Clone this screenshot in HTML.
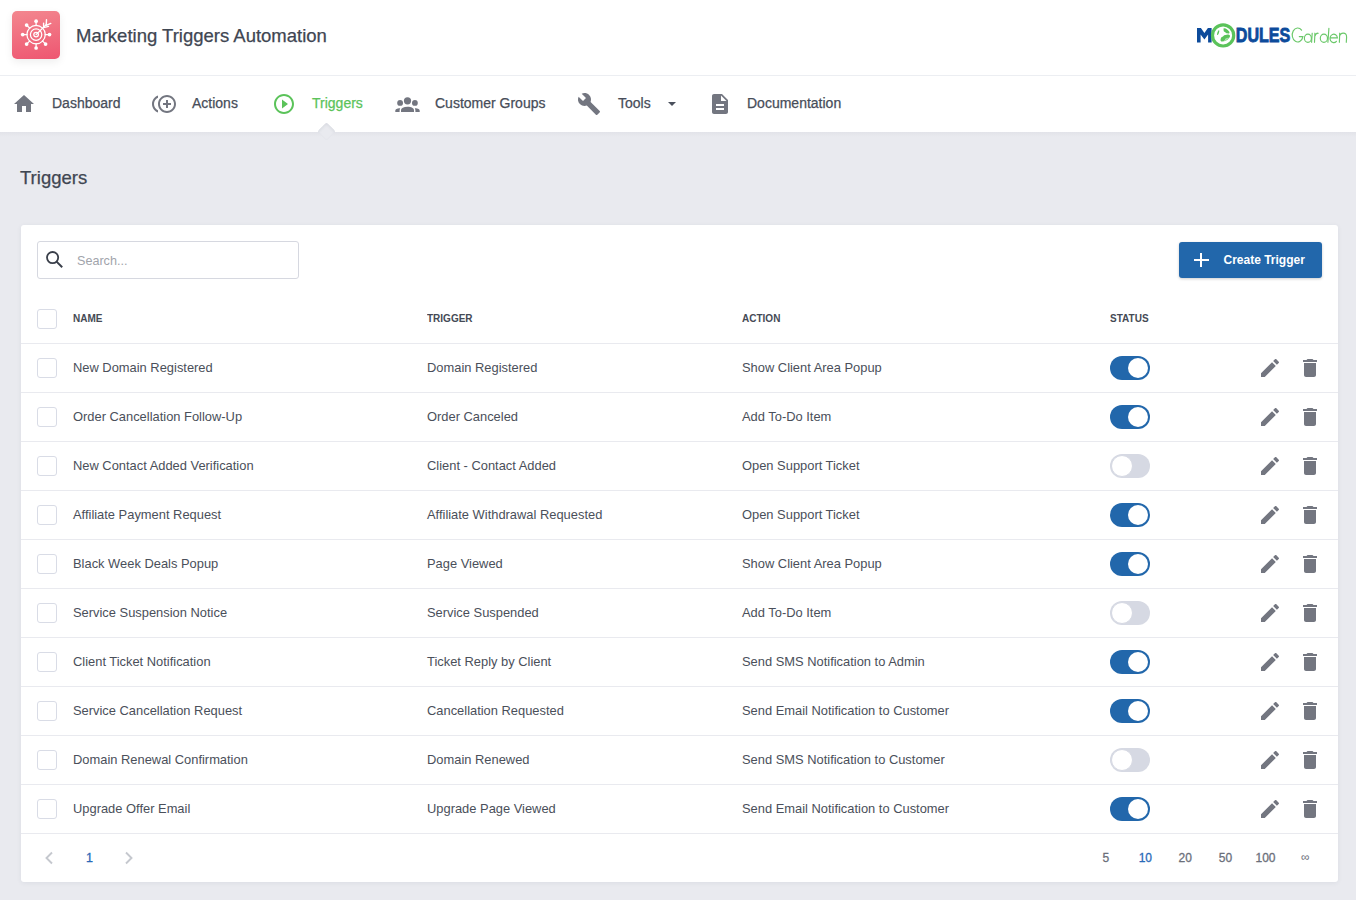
<!DOCTYPE html>
<html><head><meta charset="utf-8"><style>
*{box-sizing:border-box;margin:0;padding:0}
html,body{width:1356px;height:900px;overflow:hidden}
body{background:#e9eaef;font-family:"Liberation Sans",sans-serif;color:#484f5b;position:relative}
.t{position:absolute;line-height:20px;white-space:nowrap}
.a{position:absolute;display:block}
.b{position:absolute}
.nv{color:#474d59;-webkit-text-stroke:0.25px #474d59}
.act{color:#5bc35a;-webkit-text-stroke:0.25px #5bc35a}
.c{color:#4a4f5a}
.th{font-weight:bold;color:#454a55;transform:scaleX(0.91);transform-origin:0 0}
.cb{position:absolute;left:37px;width:20px;height:20px;border:1px solid #d9dce6;border-radius:3px;background:#fff}
.hl{position:absolute;left:21px;width:1317px;height:1px;background:#e9eaef}
.tg{position:absolute;left:1110px;width:40px;height:24px;border-radius:12px}
.tg.on{background:#2267ab}
.tg.on i{position:absolute;left:18px;top:2px;width:20px;height:20px;border-radius:50%;background:#fff}
.tg.off{background:#d6d9e3}
.tg.off i{position:absolute;left:1px;top:1px;width:22px;height:22px;border-radius:50%;background:#fff;border:1px solid #d6d9e3}
</style></head><body>
<div class="b" style="left:0;top:0;width:1356px;height:132px;background:#fff"></div>
<div class="b" style="left:0;top:75px;width:1356px;height:1px;background:#eceef2"></div>
<div class="b" style="left:12px;top:11px;width:48px;height:48px;border-radius:5px;background:linear-gradient(170deg,#f3878f,#ee5671);box-shadow:0 3px 8px rgba(0,0,0,.07)"></div>
<div class="t " style="left:76px;top:25.59px;font-size:18.5px;color:#3f4652;-webkit-text-stroke:0.25px #3f4652">Marketing Triggers Automation</div>
<svg class="a" style="left:12px;top:11px" width="48" height="48" viewBox="0 0 48 48" fill="none" stroke="#fff" stroke-width="1.25" stroke-linecap="round"><circle cx="24.1" cy="23.6" r="9.2"/><circle cx="24.1" cy="23.6" r="5.7"/><circle cx="24.1" cy="23.6" r="2.3"/><path d="M24.10 14.70L24.10 10.20 M17.81 17.31L14.62 14.12 M15.20 23.60L10.70 23.60 M17.81 29.89L14.62 33.08 M24.10 32.50L24.10 37.00 M30.39 29.89L33.58 33.08 M33.00 23.60L37.50 23.60"/><circle cx="24.10" cy="10.20" r="1.85" fill="#fff" stroke="none"/><circle cx="14.62" cy="14.12" r="1.85" fill="#fff" stroke="none"/><circle cx="10.70" cy="23.60" r="1.85" fill="#fff" stroke="none"/><circle cx="14.62" cy="33.08" r="1.85" fill="#fff" stroke="none"/><circle cx="24.10" cy="37.00" r="1.85" fill="#fff" stroke="none"/><circle cx="33.58" cy="33.08" r="1.85" fill="#fff" stroke="none"/><circle cx="37.50" cy="23.60" r="1.85" fill="#fff" stroke="none"/><path d="M24.1 23.6L34.6 13.2" stroke-width="1.3"/><path d="M34.5 8.6L34.2 14.3L38.8 12.4M31.6 12.3L31.6 16.6L36.5 15.4" stroke-width="1.4" stroke-linejoin="round"/></svg>
<svg class="a" style="left:12px;top:92px;" width="24" height="24" viewBox="0 0 24 24" fill="#737680"><path d="M10 20v-6h4v6h5v-8h3L12 3 2 12h3v8z"/></svg>
<div class="t nv" style="left:52px;top:93.15px;font-size:14px;">Dashboard</div>
<svg class="a" style="left:152px;top:92px;" width="24" height="24" viewBox="0 0 24 24" fill="#737680"><path d="M16 8h-2v3h-3v2h3v3h2v-3h3v-2h-3zM2 12c0-2.790 1.640-5.200 4.010-6.320V3.520C2.520 4.760 0 8.090 0 12s2.520 7.240 6.010 8.480v-2.160C3.640 17.200 2 14.790 2 12zm13-9c-4.960 0-9 4.040-9 9s4.040 9 9 9 9-4.040 9-9-4.040-9-9-9zm0 16c-3.860 0-7-3.140-7-7s3.140-7 7-7 7 3.140 7 7-3.140 7-7 7z"/></svg>
<div class="t nv" style="left:192px;top:93.15px;font-size:14px;">Actions</div>
<svg class="a" style="left:271.5px;top:92px;" width="24" height="24" viewBox="0 0 24 24" fill="#5bc35a"><path d="M10 16.5l6-4.5-6-4.5v9zM12 2C6.48 2 2 6.48 2 12s4.48 10 10 10 10-4.48 10-10S17.52 2 12 2zm0 18c-4.41 0-8-3.59-8-8s3.59-8 8-8 8 3.59 8 8-3.59 8-8 8z"/></svg>
<div class="t act" style="left:312px;top:93.15px;font-size:14px;">Triggers</div>
<svg class="a" style="left:395px;top:93px;" width="25" height="24" viewBox="0 0 25 24" fill="#737680"><circle cx="12.5" cy="7.8" r="3.6"/><circle cx="5.1" cy="9.9" r="2.9"/><circle cx="19.9" cy="9.9" r="2.9"/><path d="M6 19v-1.6c0-1.2.7-2.2 1.8-2.7 1.2-.5 2.8-.9 4.7-.9s3.5.4 4.7.9c1.1.5 1.8 1.5 1.8 2.7V19z"/><path d="M0.3 19v-1.3c0-.8.5-1.5 1.2-1.8.8-.3 1.7-.6 2.7-.6.4 0 .7 0 1 .1-.4.6-.6 1.4-.6 2.2V19z"/><path d="M24.7 19v-1.3c0-.8-.5-1.5-1.2-1.8-.8-.3-1.7-.6-2.7-.6-.4 0-.7 0-1 .1.4.6.6 1.4.6 2.2V19z"/></svg>
<div class="t nv" style="left:435px;top:93.15px;font-size:14px;">Customer Groups</div>
<svg class="a" style="left:577px;top:92px;" width="24" height="24" viewBox="0 0 24 24" fill="#737680"><path d="M22.7 19l-9.1-9.1c.9-2.3.4-5-1.5-6.9-2-2-5-2.4-7.4-1.3L9 6 6 9 1.6 4.7C.4 7.1.9 10.1 2.9 12.1c1.9 1.9 4.6 2.4 6.9 1.5l9.1 9.1c.4.4 1 .4 1.4 0l2.3-2.3c.5-.4.5-1.1.1-1.4z"/></svg>
<div class="t nv" style="left:618px;top:93.15px;font-size:14px;">Tools</div>
<div class="b" style="left:668px;top:102px;width:0;height:0;border-left:4px solid transparent;border-right:4px solid transparent;border-top:4px solid #4a505c"></div>
<svg class="a" style="left:708px;top:92px;" width="24" height="24" viewBox="0 0 24 24" fill="#737680"><path d="M14 2H6c-1.1 0-1.99.9-1.99 2L4 20c0 1.1.89 2 1.99 2H18c1.1 0 2-.9 2-2V8l-6-6zm2 16H8v-2h8v2zm0-4H8v-2h8v2zm-3-5V3.5L18.5 9H13z"/></svg>
<div class="t nv" style="left:747px;top:93.15px;font-size:14px;">Documentation</div>
<div class="b" style="left:0;top:132px;width:1356px;height:5px;background:linear-gradient(rgba(60,65,90,.045),rgba(60,65,90,0))"></div>
<div class="b" style="left:319.5px;top:125px;width:13px;height:13px;border-radius:2px;background:#e9eaef;transform:rotate(45deg);box-shadow:inset 1px 1px 3px rgba(60,65,90,.09)"></div>
<div class="t " style="left:20px;top:167.59px;font-size:18.5px;color:#3f4652;-webkit-text-stroke:0.25px #3f4652">Triggers</div>
<div class="b" style="left:21px;top:225px;width:1317px;height:657px;background:#fff;border-radius:3px;box-shadow:0 1px 5px rgba(40,50,80,.07)"></div>
<div class="b" style="left:37px;top:241px;width:262px;height:38px;border:1px solid #d6d8e0;border-radius:3px"></div>
<svg class="a" style="left:44px;top:249px" width="22" height="22" viewBox="0 0 22 22" fill="none" stroke="#3a3f4a" stroke-width="1.8"><circle cx="8.6" cy="8.6" r="5.6"/><path d="M12.6 12.6L18.2 18.2" stroke-width="2"/></svg>
<div class="t " style="left:77px;top:250.63px;font-size:12.6px;color:#a1a4ab">Search...</div>
<div class="b" style="left:1179px;top:242px;width:143px;height:36px;background:#2267ab;border-radius:3px;box-shadow:0 1px 3px rgba(0,0,0,.2)"></div>
<svg class="a" style="left:1193px;top:252px" width="16" height="16" viewBox="0 0 16 16" fill="#fff"><rect x="7" y="1" width="2" height="14"/><rect x="1" y="7" width="15" height="2"/></svg>
<div class="t " style="left:1223.5px;top:250.34px;font-size:12px;color:#fff;font-weight:bold">Create Trigger</div>
<div class="cb" style="top:309px"></div>
<div class="t th" style="left:73px;top:308.19px;font-size:11px;">NAME</div>
<div class="t th" style="left:427px;top:308.19px;font-size:11px;">TRIGGER</div>
<div class="t th" style="left:742px;top:308.19px;font-size:11px;">ACTION</div>
<div class="t th" style="left:1110px;top:308.19px;font-size:11px;">STATUS</div>
<div class="hl" style="top:343px"></div>
<div class="cb" style="top:358px"></div>
<div class="t c" style="left:73px;top:357.53px;font-size:12.9px;">New Domain Registered</div>
<div class="t c" style="left:427px;top:357.53px;font-size:12.9px;">Domain Registered</div>
<div class="t c" style="left:742px;top:357.53px;font-size:12.9px;">Show Client Area Popup</div>
<div class="tg on" style="top:356px"><i></i></div>
<svg class="a" style="left:1257.6px;top:356px;" width="24" height="24" viewBox="0 0 24 24" fill="#737680"><path d="M3 17.25V21h3.75L17.81 9.94l-3.75-3.75L3 17.25zM20.71 7.04c.39-.39.39-1.02 0-1.41l-2.34-2.34c-.39-.39-1.02-.39-1.41 0l-1.83 1.83 3.75 3.75 1.83-1.83z"/></svg>
<svg class="a" style="left:1298px;top:356px;" width="24" height="24" viewBox="0 0 24 24" fill="#737680"><path d="M6 19c0 1.1.9 2 2 2h8c1.1 0 2-.9 2-2V7H6v12zM19 4h-3.5l-1-1h-5l-1 1H5v2h14V4z"/></svg>
<div class="hl" style="top:392px"></div>
<div class="cb" style="top:407px"></div>
<div class="t c" style="left:73px;top:406.53px;font-size:12.9px;">Order Cancellation Follow-Up</div>
<div class="t c" style="left:427px;top:406.53px;font-size:12.9px;">Order Canceled</div>
<div class="t c" style="left:742px;top:406.53px;font-size:12.9px;">Add To-Do Item</div>
<div class="tg on" style="top:405px"><i></i></div>
<svg class="a" style="left:1257.6px;top:405px;" width="24" height="24" viewBox="0 0 24 24" fill="#737680"><path d="M3 17.25V21h3.75L17.81 9.94l-3.75-3.75L3 17.25zM20.71 7.04c.39-.39.39-1.02 0-1.41l-2.34-2.34c-.39-.39-1.02-.39-1.41 0l-1.83 1.83 3.75 3.75 1.83-1.83z"/></svg>
<svg class="a" style="left:1298px;top:405px;" width="24" height="24" viewBox="0 0 24 24" fill="#737680"><path d="M6 19c0 1.1.9 2 2 2h8c1.1 0 2-.9 2-2V7H6v12zM19 4h-3.5l-1-1h-5l-1 1H5v2h14V4z"/></svg>
<div class="hl" style="top:441px"></div>
<div class="cb" style="top:456px"></div>
<div class="t c" style="left:73px;top:455.53px;font-size:12.9px;">New Contact Added Verification</div>
<div class="t c" style="left:427px;top:455.53px;font-size:12.9px;">Client - Contact Added</div>
<div class="t c" style="left:742px;top:455.53px;font-size:12.9px;">Open Support Ticket</div>
<div class="tg off" style="top:454px"><i></i></div>
<svg class="a" style="left:1257.6px;top:454px;" width="24" height="24" viewBox="0 0 24 24" fill="#737680"><path d="M3 17.25V21h3.75L17.81 9.94l-3.75-3.75L3 17.25zM20.71 7.04c.39-.39.39-1.02 0-1.41l-2.34-2.34c-.39-.39-1.02-.39-1.41 0l-1.83 1.83 3.75 3.75 1.83-1.83z"/></svg>
<svg class="a" style="left:1298px;top:454px;" width="24" height="24" viewBox="0 0 24 24" fill="#737680"><path d="M6 19c0 1.1.9 2 2 2h8c1.1 0 2-.9 2-2V7H6v12zM19 4h-3.5l-1-1h-5l-1 1H5v2h14V4z"/></svg>
<div class="hl" style="top:490px"></div>
<div class="cb" style="top:505px"></div>
<div class="t c" style="left:73px;top:504.53px;font-size:12.9px;">Affiliate Payment Request</div>
<div class="t c" style="left:427px;top:504.53px;font-size:12.9px;">Affiliate Withdrawal Requested</div>
<div class="t c" style="left:742px;top:504.53px;font-size:12.9px;">Open Support Ticket</div>
<div class="tg on" style="top:503px"><i></i></div>
<svg class="a" style="left:1257.6px;top:503px;" width="24" height="24" viewBox="0 0 24 24" fill="#737680"><path d="M3 17.25V21h3.75L17.81 9.94l-3.75-3.75L3 17.25zM20.71 7.04c.39-.39.39-1.02 0-1.41l-2.34-2.34c-.39-.39-1.02-.39-1.41 0l-1.83 1.83 3.75 3.75 1.83-1.83z"/></svg>
<svg class="a" style="left:1298px;top:503px;" width="24" height="24" viewBox="0 0 24 24" fill="#737680"><path d="M6 19c0 1.1.9 2 2 2h8c1.1 0 2-.9 2-2V7H6v12zM19 4h-3.5l-1-1h-5l-1 1H5v2h14V4z"/></svg>
<div class="hl" style="top:539px"></div>
<div class="cb" style="top:554px"></div>
<div class="t c" style="left:73px;top:553.53px;font-size:12.9px;">Black Week Deals Popup</div>
<div class="t c" style="left:427px;top:553.53px;font-size:12.9px;">Page Viewed</div>
<div class="t c" style="left:742px;top:553.53px;font-size:12.9px;">Show Client Area Popup</div>
<div class="tg on" style="top:552px"><i></i></div>
<svg class="a" style="left:1257.6px;top:552px;" width="24" height="24" viewBox="0 0 24 24" fill="#737680"><path d="M3 17.25V21h3.75L17.81 9.94l-3.75-3.75L3 17.25zM20.71 7.04c.39-.39.39-1.02 0-1.41l-2.34-2.34c-.39-.39-1.02-.39-1.41 0l-1.83 1.83 3.75 3.75 1.83-1.83z"/></svg>
<svg class="a" style="left:1298px;top:552px;" width="24" height="24" viewBox="0 0 24 24" fill="#737680"><path d="M6 19c0 1.1.9 2 2 2h8c1.1 0 2-.9 2-2V7H6v12zM19 4h-3.5l-1-1h-5l-1 1H5v2h14V4z"/></svg>
<div class="hl" style="top:588px"></div>
<div class="cb" style="top:603px"></div>
<div class="t c" style="left:73px;top:602.53px;font-size:12.9px;">Service Suspension Notice</div>
<div class="t c" style="left:427px;top:602.53px;font-size:12.9px;">Service Suspended</div>
<div class="t c" style="left:742px;top:602.53px;font-size:12.9px;">Add To-Do Item</div>
<div class="tg off" style="top:601px"><i></i></div>
<svg class="a" style="left:1257.6px;top:601px;" width="24" height="24" viewBox="0 0 24 24" fill="#737680"><path d="M3 17.25V21h3.75L17.81 9.94l-3.75-3.75L3 17.25zM20.71 7.04c.39-.39.39-1.02 0-1.41l-2.34-2.34c-.39-.39-1.02-.39-1.41 0l-1.83 1.83 3.75 3.75 1.83-1.83z"/></svg>
<svg class="a" style="left:1298px;top:601px;" width="24" height="24" viewBox="0 0 24 24" fill="#737680"><path d="M6 19c0 1.1.9 2 2 2h8c1.1 0 2-.9 2-2V7H6v12zM19 4h-3.5l-1-1h-5l-1 1H5v2h14V4z"/></svg>
<div class="hl" style="top:637px"></div>
<div class="cb" style="top:652px"></div>
<div class="t c" style="left:73px;top:651.53px;font-size:12.9px;">Client Ticket Notification</div>
<div class="t c" style="left:427px;top:651.53px;font-size:12.9px;">Ticket Reply by Client</div>
<div class="t c" style="left:742px;top:651.53px;font-size:12.9px;">Send SMS Notification to Admin</div>
<div class="tg on" style="top:650px"><i></i></div>
<svg class="a" style="left:1257.6px;top:650px;" width="24" height="24" viewBox="0 0 24 24" fill="#737680"><path d="M3 17.25V21h3.75L17.81 9.94l-3.75-3.75L3 17.25zM20.71 7.04c.39-.39.39-1.02 0-1.41l-2.34-2.34c-.39-.39-1.02-.39-1.41 0l-1.83 1.83 3.75 3.75 1.83-1.83z"/></svg>
<svg class="a" style="left:1298px;top:650px;" width="24" height="24" viewBox="0 0 24 24" fill="#737680"><path d="M6 19c0 1.1.9 2 2 2h8c1.1 0 2-.9 2-2V7H6v12zM19 4h-3.5l-1-1h-5l-1 1H5v2h14V4z"/></svg>
<div class="hl" style="top:686px"></div>
<div class="cb" style="top:701px"></div>
<div class="t c" style="left:73px;top:700.53px;font-size:12.9px;">Service Cancellation Request</div>
<div class="t c" style="left:427px;top:700.53px;font-size:12.9px;">Cancellation Requested</div>
<div class="t c" style="left:742px;top:700.53px;font-size:12.9px;">Send Email Notification to Customer</div>
<div class="tg on" style="top:699px"><i></i></div>
<svg class="a" style="left:1257.6px;top:699px;" width="24" height="24" viewBox="0 0 24 24" fill="#737680"><path d="M3 17.25V21h3.75L17.81 9.94l-3.75-3.75L3 17.25zM20.71 7.04c.39-.39.39-1.02 0-1.41l-2.34-2.34c-.39-.39-1.02-.39-1.41 0l-1.83 1.83 3.75 3.75 1.83-1.83z"/></svg>
<svg class="a" style="left:1298px;top:699px;" width="24" height="24" viewBox="0 0 24 24" fill="#737680"><path d="M6 19c0 1.1.9 2 2 2h8c1.1 0 2-.9 2-2V7H6v12zM19 4h-3.5l-1-1h-5l-1 1H5v2h14V4z"/></svg>
<div class="hl" style="top:735px"></div>
<div class="cb" style="top:750px"></div>
<div class="t c" style="left:73px;top:749.53px;font-size:12.9px;">Domain Renewal Confirmation</div>
<div class="t c" style="left:427px;top:749.53px;font-size:12.9px;">Domain Renewed</div>
<div class="t c" style="left:742px;top:749.53px;font-size:12.9px;">Send SMS Notification to Customer</div>
<div class="tg off" style="top:748px"><i></i></div>
<svg class="a" style="left:1257.6px;top:748px;" width="24" height="24" viewBox="0 0 24 24" fill="#737680"><path d="M3 17.25V21h3.75L17.81 9.94l-3.75-3.75L3 17.25zM20.71 7.04c.39-.39.39-1.02 0-1.41l-2.34-2.34c-.39-.39-1.02-.39-1.41 0l-1.83 1.83 3.75 3.75 1.83-1.83z"/></svg>
<svg class="a" style="left:1298px;top:748px;" width="24" height="24" viewBox="0 0 24 24" fill="#737680"><path d="M6 19c0 1.1.9 2 2 2h8c1.1 0 2-.9 2-2V7H6v12zM19 4h-3.5l-1-1h-5l-1 1H5v2h14V4z"/></svg>
<div class="hl" style="top:784px"></div>
<div class="cb" style="top:799px"></div>
<div class="t c" style="left:73px;top:798.53px;font-size:12.9px;">Upgrade Offer Email</div>
<div class="t c" style="left:427px;top:798.53px;font-size:12.9px;">Upgrade Page Viewed</div>
<div class="t c" style="left:742px;top:798.53px;font-size:12.9px;">Send Email Notification to Customer</div>
<div class="tg on" style="top:797px"><i></i></div>
<svg class="a" style="left:1257.6px;top:797px;" width="24" height="24" viewBox="0 0 24 24" fill="#737680"><path d="M3 17.25V21h3.75L17.81 9.94l-3.75-3.75L3 17.25zM20.71 7.04c.39-.39.39-1.02 0-1.41l-2.34-2.34c-.39-.39-1.02-.39-1.41 0l-1.83 1.83 3.75 3.75 1.83-1.83z"/></svg>
<svg class="a" style="left:1298px;top:797px;" width="24" height="24" viewBox="0 0 24 24" fill="#737680"><path d="M6 19c0 1.1.9 2 2 2h8c1.1 0 2-.9 2-2V7H6v12zM19 4h-3.5l-1-1h-5l-1 1H5v2h14V4z"/></svg>
<div class="hl" style="top:833px"></div>
<svg class="a" style="left:44px;top:851px" width="10" height="14" viewBox="0 0 10 14" fill="none" stroke="#c5c8ce" stroke-width="1.9"><path d="M8 1.5L2.5 7L8 12.5"/></svg>
<div class="t " style="left:86px;top:847.67px;font-size:12.5px;color:#2a6ab8;-webkit-text-stroke:0.3px #2a6ab8">1</div>
<svg class="a" style="left:124px;top:851px" width="10" height="14" viewBox="0 0 10 14" fill="none" stroke="#c5c8ce" stroke-width="1.9"><path d="M2 1.5L7.5 7L2 12.5"/></svg>
<div class="t " style="left:1102.5px;top:847.84px;font-size:12px;color:#6b6f7a;-webkit-text-stroke:0.3px #6b6f7a">5</div>
<div class="t " style="left:1138.7px;top:847.84px;font-size:12px;color:#2a6ab8;-webkit-text-stroke:0.3px #2a6ab8">10</div>
<div class="t " style="left:1178.5px;top:847.84px;font-size:12px;color:#6b6f7a;-webkit-text-stroke:0.3px #6b6f7a">20</div>
<div class="t " style="left:1218.8px;top:847.84px;font-size:12px;color:#6b6f7a;-webkit-text-stroke:0.3px #6b6f7a">50</div>
<div class="t " style="left:1255.5px;top:847.84px;font-size:12px;color:#6b6f7a;-webkit-text-stroke:0.3px #6b6f7a">100</div>
<div class="t " style="left:1301px;top:846.84px;font-size:12px;color:#6b6f7a">&#8734;</div>
<svg class="a" style="left:1190px;top:15px" width="166" height="40" viewBox="1190 15 166 40">
<path d="M1197 42.6V28.1H1200.9L1204.4 33L1207.9 28.1H1211.6V42.6H1208.1V34.6L1204.4 39.4L1200.6 34.6V42.6Z" fill="#0d4b9b"/>
<text x="1235.8" y="42.2" font-family="Liberation Sans" font-weight="bold" font-size="19.8" fill="#0d4b9b" stroke="#0d4b9b" stroke-width="0.8" textLength="54.5" lengthAdjust="spacingAndGlyphs">DULES</text>
<circle cx="1223.1" cy="35.4" r="10.6" fill="#fff" stroke="#5bc35a" stroke-width="3.2"/>
<g fill="#5bc35a">
<path d="M1223.6 28.3c1.2-.2 2.4.2 3.2.9.9.6 1.6 1.4 2.3 2.3.5.7.6 1.6-.1 2-.7.3-1.3-.4-2-.2-.6.3-.9-.6-1.5-.9-.7-.3-1.5-.5-1.8-1.3-.3-.9-.1-1.9-.1-2.8z"/>
<path d="M1218.4 30.4c.5-.3 1-.1.9.5-.1.8-.3 1.6-.5 2.4-.2.7-.7 1.6-1.3 1.8-.6.1-.5-.8-.4-1.3.3-1.2.6-2.5 1.3-3.4z"/>
<path d="M1221.4 37.3c.6-.6 1.5-.6 2-1.4.5-.6 1.2-1 1.9-.9.9.1 1.6-.6 2.4-.6.9 0 1.8.4 2.3 1.1.3.9-.4 1.8-.9 2.5-.8 1-1.7 1.9-2.9 2.5-1.3.7-2.8 1.1-4.3 1.1-.8-.1-1.4-.8-1.4-1.6.1-.9.4-1.9.9-2.7z"/>
</g>
<path d="M1225 39.5c1-.8 2.3-1.3 3.5-1.3M1224 41.2c.9-.9 2-1.5 3.2-1.7" stroke="#fff" stroke-width=".5" fill="none"/>
<g fill="none" stroke="#5bc35a" stroke-width="1.15" stroke-linecap="round" opacity="0.9"><path d="M1301.6 30.2A5.4 7 0 1 0 1302.9 36.6H1299.3"/><ellipse cx="1307.9" cy="38.2" rx="3.5" ry="4.1"/><path d="M1312.2 33.2L1311.6 42.3"/><path d="M1314.9 33.2L1314.5 42.3M1314.8 36.4Q1315.6 33.1 1318.2 33.2"/><ellipse cx="1323.9" cy="38.2" rx="3.6" ry="4.1"/><path d="M1328.9 28.4L1327.9 42.3"/><path d="M1330.1 37.9H1337.4A3.7 4.2 0 1 0 1336.4 41.3"/><path d="M1339.7 33.2L1339.4 42.3M1339.6 36.4Q1340.2 33.1 1343.2 33.1Q1346.7 33.1 1346.6 37.2L1346.3 42.3"/></g>
</svg>
</body></html>
